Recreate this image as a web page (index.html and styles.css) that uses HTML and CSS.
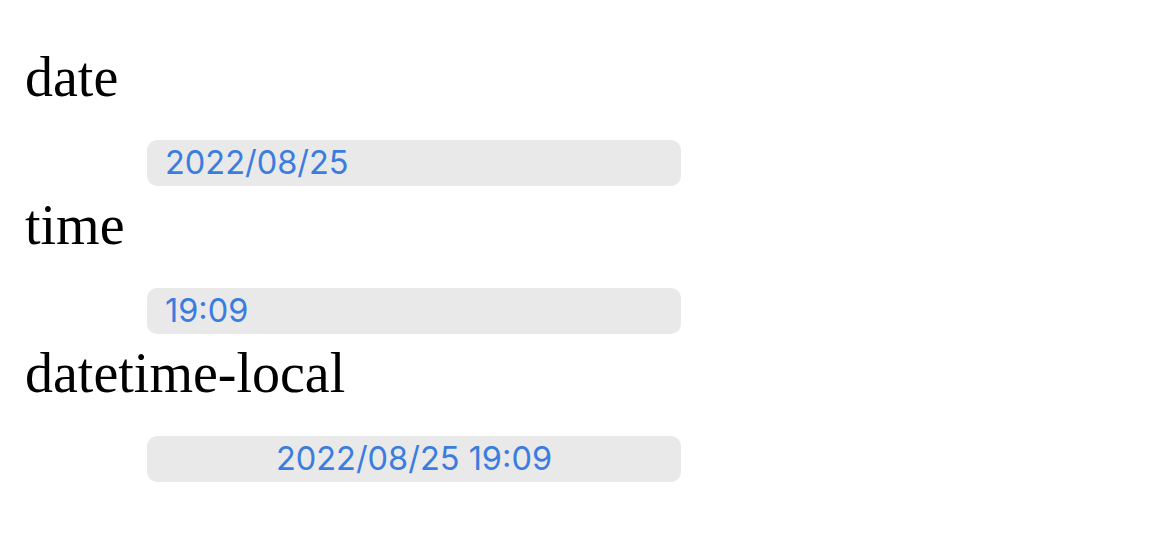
FILE: index.html
```html
<!DOCTYPE html>
<html lang="ja">
<head>
<meta charset="utf-8">
<link rel="stylesheet" href="styles.css">
</head>
<body>
<main class="form">
  <div class="field">
    <div class="label">date</div>
    <div class="picker">2022/08/25</div>
  </div>
  <div class="field">
    <div class="label">time</div>
    <div class="picker">19:09</div>
  </div>
  <div class="field">
    <div class="label">datetime-local</div>
    <div class="picker picker-center">2022/08/25 19:09</div>
  </div>
</main>
</body>
</html>
```
FILE: styles.css
```css
html, body {
  margin: 0;
  padding: 0;
  background: #ffffff;
}
.form {
  display: flex;
  flex-direction: column;
  padding: 49px 0 0 25px;
}
.field {
  display: flex;
  flex-direction: column;
  align-items: flex-start;
  padding-bottom: 11px;
}
.label {
  font-family: "Liberation Serif", "Times New Roman", serif;
  font-size: 56px;
  line-height: 56px;
  color: #000;
}
.picker {
  box-sizing: border-box;
  margin: 35px 0 0 122px;
  width: 534px;
  height: 46px;
  border-radius: 10px;
  background: #e9e9e9;
  color: #3b7ddf;
  font-family: Inter, "Noto Sans", sans-serif;
  font-size: 32.5px;
  line-height: 46px;
  padding: 0 18px;
  white-space: nowrap;
}
.picker-center {
  text-align: center;
}
```
